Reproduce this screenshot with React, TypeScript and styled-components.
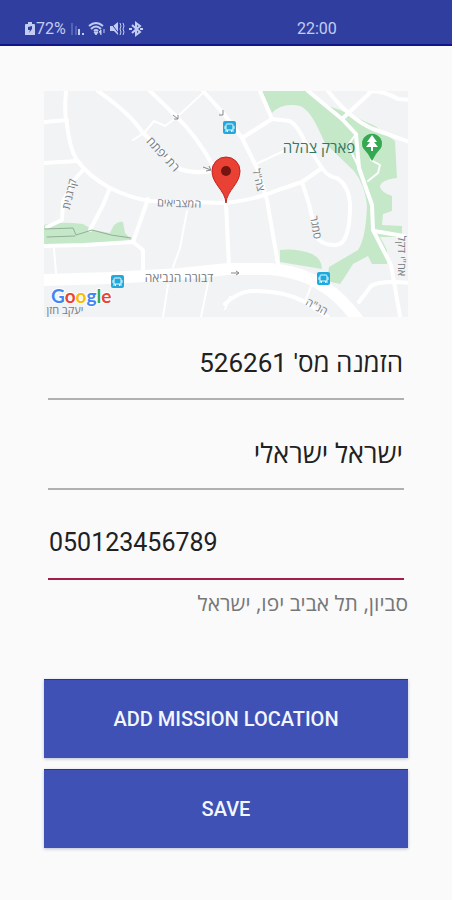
import React from 'react';
import styled, { createGlobalStyle } from 'styled-components';

const GlobalStyle = createGlobalStyle`
  * { box-sizing: border-box; }
  body { margin: 0; background: #fff; font-family: Roboto, "Open Sans", sans-serif; }
`;

const Screen = styled.div`
  min-height: 100vh;
  margin-right: 3px;
  background: #fafafa;
`;

const StatusBar = styled.header`
  display: grid;
  grid-template-columns: 297fr 155fr;
  align-items: center;
  height: 46px;
  padding-top: 14px;
  background: #303f9f;
  border-bottom: 2px solid #10168a;
  color: #c3cdf3;
  font-size: 16px;
  line-height: 20px;
`;

const StatusIcons = styled.div`
  display: flex;
  align-items: center;
  padding-left: 25px;
  gap: 4px;
`;

const Battery = styled.span`
  display: flex;
  align-items: center;
  gap: 1px;
`;

const Glyph = styled.svg`
  display: block;
  height: 16px;
  flex: none;
`;

const Form = styled.form`
  display: flex;
  flex-direction: column;
  padding: 45px 44px;
`;

const MapImage = styled.svg`
  display: block;
  width: 100%;
  font-family: "Open Sans", sans-serif;
`;

const Fields = styled.div`
  display: grid;
  gap: 18px;
  margin: 11px 4px 0;
`;

const Field = styled.input<{ $active?: boolean; $size: number }>`
  width: 100%;
  height: 72px;
  padding: 0 1px 2px;
  border: 0;
  border-radius: 0;
  border-bottom: ${p => (p.$active ? '2px solid #a51c4a' : '2px solid #b0b0b0')};
  outline: 0;
  background: transparent;
  color: #212121;
  font-family: Roboto, "Open Sans", sans-serif;
  font-size: ${p => p.$size}px;
  line-height: 36px;
`;

const Address = styled.p`
  margin: 10px 0 0;
  color: #777;
  font-family: "Open Sans", sans-serif;
  font-size: 21px;
  line-height: 26px;
`;

const Actions = styled.div`
  display: grid;
  gap: 11px;
  margin-top: 63px;
`;

const Action = styled.button`
  height: 79px;
  border: 0;
  border-top: 1px solid #283593;
  background: #3f51b5;
  box-shadow: 0 1px 3px rgba(40, 60, 120, 0.3);
  color: #f2f6ff;
  font-family: Roboto, sans-serif;
  font-size: 20px;
  font-weight: 500;
  line-height: 24px;
`;

const BusStop = ({ x, y }: { x: number; y: number }) => (
  <g transform={`translate(${x} ${y})`}>
    <rect x="-7" y="-7" width="13" height="13" rx="2" fill="#1fa9dc" />
    <path d="M-4 4V-3Q-4 -4 -3 -4H2Q3 -4 3 -3V4M-4 2H3M-5 -2V1M4 -2V1" fill="none" stroke="#e6f8ff" strokeWidth="1" />
    <path d="M-3 3H-2M1 3H2" stroke="#e6f8ff" strokeWidth="2" />
  </g>
);

const streets = [
  'M66 91Q64 115 67 124Q70 150 77 160Q88 176 110 188Q130 198 150 201L226 203Q258 199 278 190L302 182L322 168Q328 177 337 178Q350 187 350 207C350 228 346 246 335 245Q323 245 317 238L309 204L302 182',
  'M98 91Q132 115 142 132L180 169Q194 174 212 171Q222 178 226 203L229 266',
  'M150 91L177 117Q197 137 212 164L221 184',
  'M203 91L224 114L242 138L258 170L267 200L278 264',
  'M260 91L272 119L242 138',
  'M272 119L290 121Q298 126 305 142L322 168',
  'M44 122L67 120', 'M44 163L77 161',
  'M84 169L74 180L63 202L62 220L47 227',
  'M110 188L103 205L90 230',
  'M44 246L84 245L133 242L143 250V272', 'M133 242L148 199',
  'M308 91L342 119L356 134L359 168L372 205L373 230L391 265L400 316',
  'M342 119L373 90', 'M328 91Q350 119 373 129L410 142', 'M369 91Q385 91 398 99L410 100',
  'M374 231L404 236',
  'M225 304Q236 293 250 291Q283 290 305 302L328 317',
  'M359 302L371 286Q380 280 410 283',
];

const lanes = [
  'M133 140L144 133L154 121L165 126L177 117L204 92',
  'M258 163L284 151', 'M187 211L180 248L173 267', 'M54 249L56 273',
  'M168 285L163 317', 'M208 283L201 317', 'M230 297L225 309', 'M312 284L306 299',
  'M356 134L348 145L359 168', 'M371 160L380 165L378 173L368 181',
];

function StreetMap() {
  return (
    <MapImage viewBox="44 91 364 226" role="img" aria-label="מפה">
      <rect x="44" y="91" width="364" height="226" fill="#f1f3f4" />
      <g fill="#c5e8c9">
        <path d="M262 91H308Q322 105 340 110L375 126L395 141L397 178Q380 180 380 187Q382 193 392 196L392 211L383 214L382 225L402 226V237H380L387 250V264H372L368 256L353 264L346 275L340 284L327 281L329 267L358 250Q366 238 367 205Q365 185 354 171L325 143C315 121 308 105 294 105Q280 104 272 113Z" />
        <path d="M280 250Q297 248 312 254Q322 259 322 269L280 262Z" />
        <path d="M44 225Q58 221 83 224L93 230L110 233Q115 220 123 222L125 233L132 240L97 244L44 247Z" />
      </g>
      <g fill="none" stroke="#fff" strokeLinecap="round" strokeLinejoin="round">
        <g strokeWidth="4">{streets.map(d => <path key={d} d={d} />)}</g>
        <g strokeWidth="2">{lanes.map(d => <path key={d} d={d} />)}</g>
        <path strokeWidth="12" d="M40 280L110 278L180 274L228 269H269Q300 271 323 286Q341 297 358 320" />
        <path stroke="#95ae9a" strokeWidth="1" d="M45 229L73 228L76 235L92 230L111 235L131 238M47 237L75 236" />
      </g>
      <g fill="#777b7f" fontSize="11" textAnchor="middle">
        <text transform="translate(160 157) rotate(47)" fontSize="12">רת יפתח</text>
        <text transform="translate(73 195) rotate(-77)">קרגנית</text>
        <text transform="translate(179 207) rotate(2)">המצביאים</text>
        <text transform="translate(255 181) rotate(76)">צה"ל</text>
        <text transform="translate(312 228) rotate(80)">סמגר</text>
        <text transform="translate(398 256) rotate(90)">אח"י דקל</text>
        <text transform="translate(315 310) rotate(28)">הנ"ה</text>
        <text x="179" y="282" fontSize="12">דבורה הנביאה</text>
        <text x="65" y="314">יעקב חזן</text>
      </g>
      <path d="M231 273H239M236 271L239 273L236 275M173 115L178 119M178 115V119H174M223 110V115H219M203 167L211 170M209 166L211 170L206 171M213 177L216 182" fill="none" stroke="#888" strokeWidth="1" />
      <text x="319" y="153" fill="#35775d" fontSize="15" textAnchor="middle">פארק צהלה</text>
      <path d="M372 161Q368 153 363 148A10 10 0 1 1 381 148Q376 153 372 161Z" fill="#37a852" />
      <path d="M372 135L367 142H370L366 147H371V151H373V147H378L374 142H377Z" fill="#fff" />
      <BusStop x={230} y={128} />
      <BusStop x={118} y={282} />
      <BusStop x={324} y={279} />
      <path d="M226 203C225 190 212 184 212 171A14 14 0 0 1 240 171C240 184 227 190 226 203Z" fill="#e94235" stroke="#c5221f" strokeWidth="1" />
      <circle cx="226" cy="171" r="5" fill="#741510" />
      <text x="51" y="303" fontFamily="Lato, sans-serif" fontSize="19" fontWeight="700" stroke="#fff" strokeWidth="2" paintOrder="stroke">
        <tspan fill="#4285f4">G</tspan><tspan fill="#ea4335">o</tspan><tspan fill="#fbbc05">o</tspan><tspan fill="#4285f4">g</tspan><tspan fill="#34a853">l</tspan><tspan fill="#ea4335">e</tspan>
      </text>
    </MapImage>
  );
}

export default function App() {
  return (
    <Screen>
      <GlobalStyle />
      <StatusBar>
        <StatusIcons>
          <Battery>
            <Glyph viewBox="0 0 10 16" width="10" aria-hidden="true">
              <path d="M3 1H7V3H9Q10 3 10 4V14H0V4Q0 3 1 3H3Z" fill="#c3cdf3" />
              <path d="M3 6L7 5V8L4 12L5 9H3Z" fill="#303f9f" />
            </Glyph>
            72%
          </Battery>
          <Glyph viewBox="0 0 14 16" width="14" aria-hidden="true">
            <path d="M2 2V14M6 5V14" stroke="#7986cf" strokeWidth="1" />
            <path d="M9 8V14M13 12V14" stroke="#c3cdf3" strokeWidth="2" />
          </Glyph>
          <Glyph viewBox="0 0 18 16" width="18" aria-hidden="true">
            <path d="M1 5Q8 -1 15 5M3 8Q8 3 13 8M6 10Q8 8 10 10" fill="none" stroke="#c3cdf3" strokeWidth="2" />
            <path d="M6 11H10L8 14ZM11 11L13 9V14M16 8V12" fill="#c3cdf3" stroke="#c3cdf3" />
          </Glyph>
          <Glyph viewBox="0 0 15 16" width="15" aria-hidden="true">
            <path d="M0 5H3L8 1V14L4 10H0Z" fill="#c3cdf3" />
            <path d="M0 1L10 14" stroke="#303f9f" strokeWidth="1" />
            <path d="M10 2L11 5L10 8L11 11L10 14M13 2L14 5L13 8L14 11L13 14" fill="none" stroke="#c3cdf3" />
          </Glyph>
          <Glyph viewBox="0 0 14 16" width="14" aria-hidden="true">
            <path d="M3 4L11 11L7 14V2L11 5L3 12" fill="none" stroke="#c3cdf3" strokeWidth="2" />
            <path d="M0 8H3M11 8H14" stroke="#c3cdf3" strokeWidth="2" />
          </Glyph>
        </StatusIcons>
        <time>22:00</time>
      </StatusBar>
      <Form onSubmit={e => e.preventDefault()}>
        <StreetMap />
        <Fields>
          <Field $size={26} dir="rtl" aria-label="הזמנה" defaultValue="הזמנה מס' 526261" />
          <Field $size={27} dir="rtl" aria-label="שם" defaultValue="ישראל ישראלי" />
          <Field $size={25} $active type="tel" aria-label="טלפון" defaultValue="050123456789" />
        </Fields>
        <Address dir="rtl">סביון, תל אביב יפו, ישראל</Address>
        <Actions>
          <Action type="button">ADD MISSION LOCATION</Action>
          <Action type="submit">SAVE</Action>
        </Actions>
      </Form>
    </Screen>
  );
}
